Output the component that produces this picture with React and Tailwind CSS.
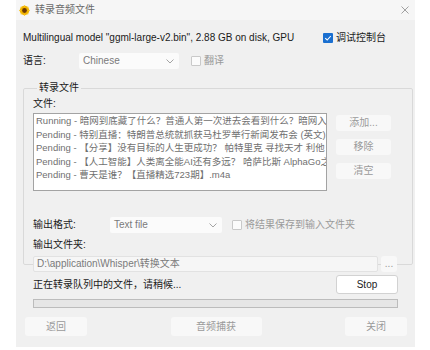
import React from 'react'

const font = { fontFamily: '"Liberation Sans", "Noto Sans CJK SC", sans-serif' }

function Chevron() {
  return (
    <svg width="8" height="5" viewBox="0 0 8 5" className="shrink-0">
      <path d="M0.5 0.5 L4 4 L7.5 0.5" fill="none" stroke="#9a9a9a" strokeWidth="0.9" />
    </svg>
  )
}

function Dropdown({ value, w }) {
  return (
    <div className={`${w} h-[16px] bg-[#fbfbfb] rounded-[2px] flex items-center justify-between pl-[4px] pr-[5px] text-[#7a7a7a]`}>
      <span>{value}</span>
      <Chevron />
    </div>
  )
}

function Check({ label }) {
  return (
    <div className="flex items-center gap-[3px] text-[#9a9a9a]">
      <span className="w-[10px] h-[10px] border border-[#c9c9c9] bg-[#fbfbfb] rounded-[1px]" />
      <span>{label}</span>
    </div>
  )
}

function Btn({ children, w, h = 'h-[16px]' }) {
  return (
    <div className={`${w} ${h} bg-[#f8f8f8] rounded-[3px] flex items-center justify-center text-[#9a9a9a]`}>
      {children}
    </div>
  )
}

// the list clips long names at its right edge, as in the app
const files = [
  'Running - 暗网到底藏了什么？普通人第一次进去会看到什么？暗网入口及',
  'Pending - 特别直播：特朗普总统就抓获马杜罗举行新闻发布会 (英文).m4',
  'Pending - 【分享】没有目标的人生更成功？  帕特里克  寻找天才  利他',
  'Pending - 【人工智能】人类离全能AI还有多远？ 哈萨比斯  AlphaGo之',
  'Pending - 曹天是谁？【直播精选723期】.m4a',
]

export default function App() {
  return (
    <div className="w-[430px] h-[350px] bg-white text-[10px] leading-[12px]" style={font}>
      <div className="ml-[16px] w-[399px] h-[347px] flex flex-col bg-[#f0f0f0]">
        {/* title bar */}
        <div className="h-[20px] bg-[#f6f6f6] flex items-center pl-[3px] pr-[6px]">
          <svg width="11" height="11" viewBox="0 0 12 12" className="mr-[5px]">
            <circle cx="6" cy="6" r="5.2" fill="#f3b400" />
            <g stroke="#f7c928" strokeWidth="1.2">
              <path d="M6 0.2V2 M6 10V11.8 M0.2 6H2 M10 6H11.8 M1.9 1.9L3.1 3.1 M8.9 8.9L10.1 10.1 M1.9 10.1L3.1 8.9 M8.9 3.1L10.1 1.9" />
            </g>
            <circle cx="6" cy="6" r="2.6" fill="#6b3a05" />
          </svg>
          <span className="text-[#6a6a6a]">转录音频文件</span>
          <svg width="8" height="8" viewBox="0 0 8 8" className="ml-auto">
            <path d="M0.5 0.5 L7.5 7.5 M7.5 0.5 L0.5 7.5" stroke="#8a8a8a" strokeWidth="0.8" />
          </svg>
        </div>

        {/* body */}
        <div className="flex-1 flex flex-col pl-[7px] pr-[8px]">
          <div className="mt-[10px] h-[16px] flex items-center text-[#1b1b1b]">
            <span className="w-[300px]">Multilingual model "ggml-large-v2.bin", 2.88 GB on disk, GPU</span>
            <div className="flex items-center gap-[3px]">
              <span className="w-[10px] h-[10px] bg-[#1a6fd0] rounded-[1px] flex items-center justify-center">
                <svg width="8" height="8" viewBox="0 0 8 8">
                  <path d="M1.2 4.2 L3.2 6 L6.8 2" fill="none" stroke="white" strokeWidth="1.1" />
                </svg>
              </span>
              <span>调试控制台</span>
            </div>
          </div>

          <div className="mt-[7px] h-[16px] flex items-center">
            <span className="w-[56px] text-[#1b1b1b]">语言:</span>
            <Dropdown value="Chinese" w="w-[100px]" />
            <div className="ml-[12px]">
              <Check label="翻译" />
            </div>
          </div>

          <fieldset className="mt-[12px] border border-[#d9d9d9] rounded-[2px] pl-[9px] pr-[15px]">
            <legend className="ml-[4px] px-[2px] leading-[14px] text-[#1b1b1b]">转录文件</legend>
            <div className="pt-[3px] text-[#1b1b1b]">文件:</div>
            <div className="mt-[3px] flex gap-[9px]">
              <div className="w-[294px] h-[78px] bg-white border border-[#a3a3a3] overflow-hidden pl-[2px] text-[#707070] text-[9.5px] leading-[13.5px]">
                {files.map((f) => (
                  <div key={f} className="whitespace-nowrap overflow-hidden">{f}</div>
                ))}
              </div>
              <div className="pt-[2px] flex flex-col gap-[8px]">
                <Btn w="w-[55px]">添加...</Btn>
                <Btn w="w-[55px]">移除</Btn>
                <Btn w="w-[55px]">清空</Btn>
              </div>
            </div>

            <div className="mt-[26px] h-[16px] flex items-center">
              <span className="w-[77px] text-[#1b1b1b]">输出格式:</span>
              <Dropdown value="Text file" w="w-[112px]" />
              <div className="ml-[10px]">
                <Check label="将结果保存到输入文件夹" />
              </div>
            </div>

            <div className="mt-[6px] text-[#1b1b1b]">输出文件夹:</div>
            <div className="mt-[5px] mb-[-8px] flex gap-[3px]">
              <div className="w-[345px] h-[16px] bg-[#f6f6f6] border border-[#e2e2e2] rounded-[2px] flex items-center pl-[3px] text-[#7a7a7a]">
                D:\application\Whisper\转换文本
              </div>
              <Btn w="w-[16px]">...</Btn>
            </div>
          </fieldset>

          <div className="mt-[10px] pl-[10px] pr-[9px] flex items-center justify-between">
            <span className="text-[#1b1b1b]">正在转录队列中的文件，请稍候...</span>
            <div className="w-[62px] h-[19px] bg-white border border-[#d2d2d2] rounded-[3px] flex items-center justify-center text-[#1b1b1b]">
              Stop
            </div>
          </div>

          <div className="mt-[5px] ml-[10px] mr-[9px] h-[9px] bg-[#e6e6e6] border border-[#bcbcbc]" />

          <div className="mt-[9px] pl-[2px] flex justify-between">
            <Btn w="w-[62px]" h="h-[19px]">返回</Btn>
            <Btn w="w-[91px]" h="h-[19px]">音频捕获</Btn>
            <Btn w="w-[62px]" h="h-[19px]">关闭</Btn>
          </div>
        </div>
      </div>
    </div>
  )
}
